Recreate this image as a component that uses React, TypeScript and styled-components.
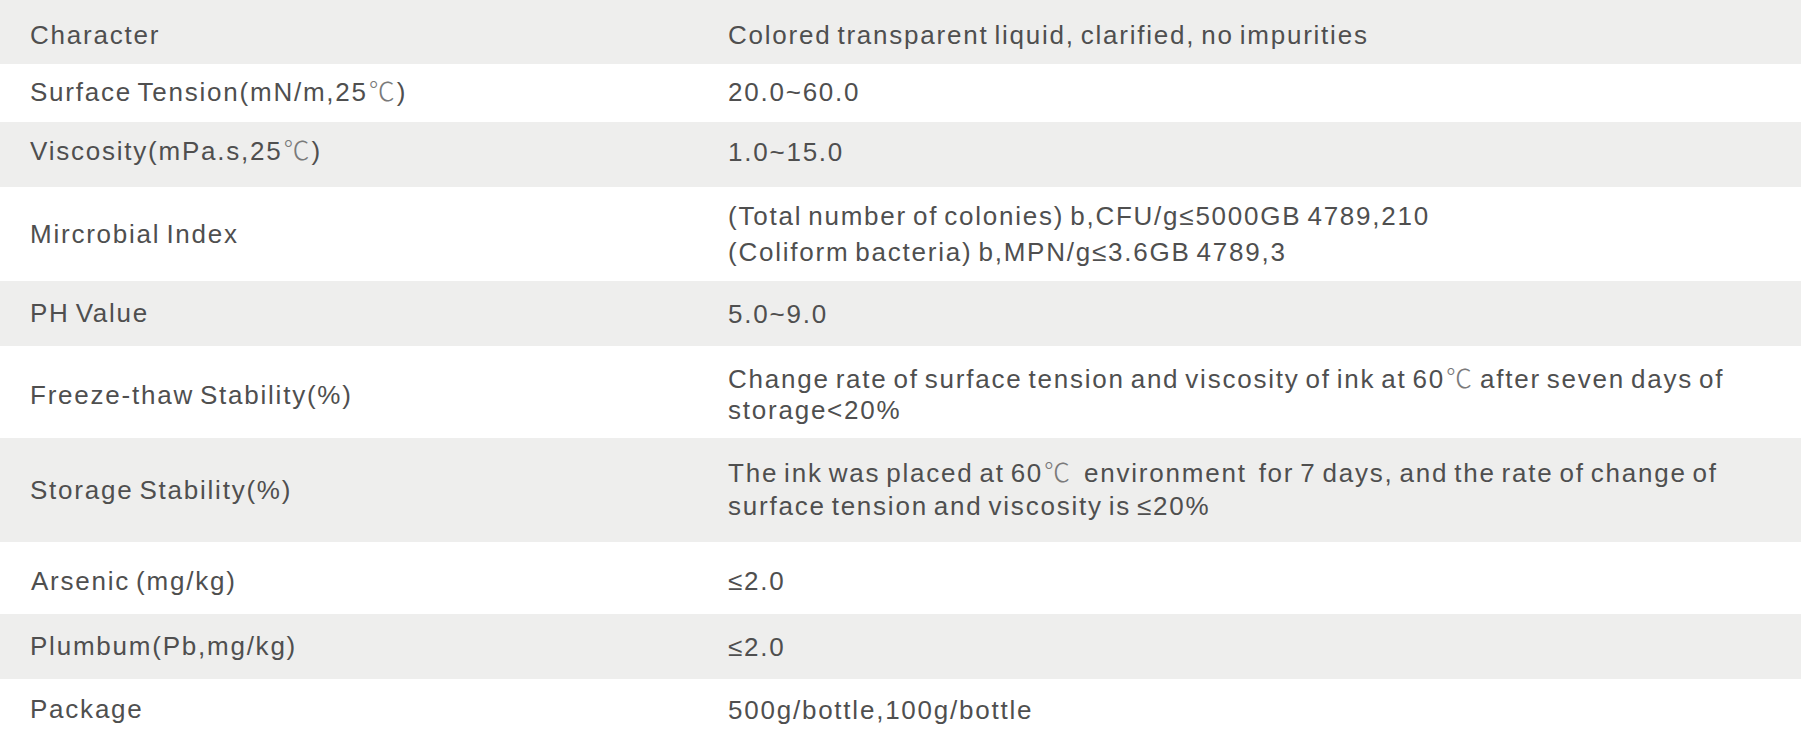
import React from "react";
import styled, { createGlobalStyle } from "styled-components";

const GlobalStyle = createGlobalStyle`
  html, body {
    margin: 0;
    padding: 0;
    background: #ffffff;
  }
  body {
    font-family: "Liberation Sans", Arial, "Noto Sans CJK SC", sans-serif;
  }
`;

const Table = styled.div`
  display: flex;
  flex-direction: column;
  width: 100%;
`;

const Row = styled.div<{ $h: number; $shade: boolean; $nudge?: number }>`
  box-sizing: border-box;
  display: grid;
  grid-template-columns: 698px 1fr;
  height: ${(p) => p.$h}px;
  padding-left: 30px;
  padding-top: ${(p) => Math.max(0, (p.$nudge ?? 0) * 2)}px;
  padding-bottom: ${(p) => Math.max(0, -(p.$nudge ?? 0) * 2)}px;
  background: ${(p) => (p.$shade ? "#eeeeed" : "#ffffff")};
  color: #4f4f4f;
  font-size: 26px;
  letter-spacing: 1.77px;
  word-spacing: -3px;
`;

const Cell = styled.div<{ $indent?: number }>`
  display: flex;
  align-items: center;
  padding-left: ${(p) => p.$indent ?? 0}px;
`;

const LabelText = styled.span`
  white-space: nowrap;
`;

const ValueText = styled.div`
  display: flex;
  flex-direction: column;
`;

const Line = styled.span<{ $lh?: number }>`
  display: block;
  line-height: ${(p) => p.$lh ?? 32}px;
  white-space: pre;
`;

const Deg = styled.span`
  display: inline-block;
  line-height: 1;
  font-family: "Noto Sans CJK SC", "DejaVu Sans", sans-serif;
  font-weight: 300;
  color: #7a7a7a;
  letter-spacing: 0;
  margin: 0 2px 0 1px;
`;

type Spec = {
  label: string;
  value: string[];
  h: number;
  lh?: number;
  indent?: number;
  nudge?: number;
};

const rows: Spec[] = [
  { label: "Character", value: ["Colored transparent liquid, clarified, no impurities"], h: 64, nudge: 3 },
  { label: "Surface Tension(mN/m,25℃)", value: ["20.0~60.0"], h: 58, nudge: -1 },
  { label: "Viscosity(mPa.s,25℃)", value: ["1.0~15.0"], h: 65, nudge: -3 },
  {
    label: "Mircrobial Index",
    value: [
      "(Total number of colonies) b,CFU/g≤5000GB 4789,210",
      "(Coliform bacteria) b,MPN/g≤3.6GB 4789,3",
    ],
    h: 94,
    lh: 36,
  },
  { label: "PH Value", value: ["5.0~9.0"], h: 65 },
  {
    label: "Freeze-thaw Stability(%)",
    value: [
      "Change rate of surface tension and viscosity of ink at 60℃ after seven days of",
      "storage<20%",
    ],
    h: 92,
    lh: 31,
    nudge: 3,
  },
  {
    label: "Storage Stability(%)",
    value: [
      "The ink was placed at 60℃  environment  for 7 days, and the rate of change of",
      "surface tension and viscosity is ≤20%",
    ],
    h: 104,
    lh: 33,
  },
  { label: "Arsenic (mg/kg)", value: ["≤2.0"], h: 72, indent: 1, nudge: 3 },
  { label: "Plumbum(Pb,mg/kg)", value: ["≤2.0"], h: 65 },
  { label: "Package", value: ["500g/bottle,100g/bottle"], h: 61 },
];

function withDegrees(text: string) {
  const parts = text.split("℃");
  return parts.map((part, i) => (
    <React.Fragment key={i}>
      {part}
      {i < parts.length - 1 && <Deg>℃</Deg>}
    </React.Fragment>
  ));
}

export default function App() {
  return (
    <>
      <GlobalStyle />
      <Table>
        {rows.map((r, i) => (
          <Row key={r.label} $h={r.h} $shade={i % 2 === 0} $nudge={r.nudge}>
            <Cell $indent={r.indent}>
              <LabelText>{withDegrees(r.label)}</LabelText>
            </Cell>
            <Cell>
              <ValueText>
                {r.value.map((line) => (
                  <Line key={line} $lh={r.lh}>
                    {withDegrees(line)}
                  </Line>
                ))}
              </ValueText>
            </Cell>
          </Row>
        ))}
      </Table>
    </>
  );
}
